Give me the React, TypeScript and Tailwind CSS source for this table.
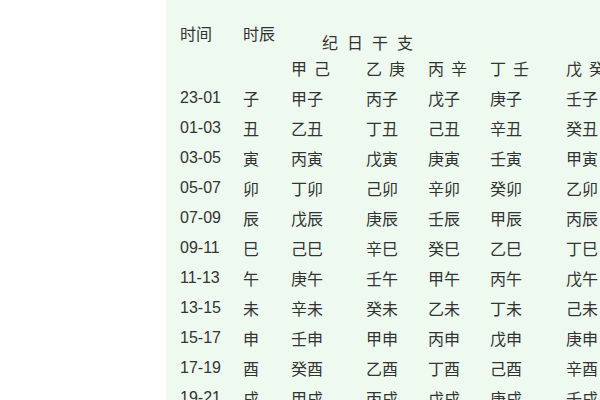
import React from "react";

const rows: string[][] = [
  ["23-01", "子", "甲子", "丙子", "戊子", "庚子", "壬子"],
  ["01-03", "丑", "乙丑", "丁丑", "己丑", "辛丑", "癸丑"],
  ["03-05", "寅", "丙寅", "戊寅", "庚寅", "壬寅", "甲寅"],
  ["05-07", "卯", "丁卯", "己卯", "辛卯", "癸卯", "乙卯"],
  ["07-09", "辰", "戊辰", "庚辰", "壬辰", "甲辰", "丙辰"],
  ["09-11", "巳", "己巳", "辛巳", "癸巳", "乙巳", "丁巳"],
  ["11-13", "午", "庚午", "壬午", "甲午", "丙午", "戊午"],
  ["13-15", "未", "辛未", "癸未", "乙未", "丁未", "己未"],
  ["15-17", "申", "壬申", "甲申", "丙申", "戊申", "庚申"],
  ["17-19", "酉", "癸酉", "乙酉", "丁酉", "己酉", "辛酉"],
  ["19-21", "戌", "甲戌", "丙戌", "戊戌", "庚戌", "壬戌"],
];

const sub: [string, string][] = [
  ["甲", "己"],
  ["乙", "庚"],
  ["丙", "辛"],
  ["丁", "壬"],
  ["戊", "癸"],
];

const cjk = "font-['Noto_Sans_CJK_SC',sans-serif]";
const num = "font-['Liberation_Sans',Arial,sans-serif]";
const cols = "grid grid-cols-[63px_48px_75px_62px_62px_76px_60px]";

export default function App() {
  return (
    <div className="flex h-[400px] w-[600px] overflow-hidden bg-white text-[#333333]">
      <div className="w-[166px] shrink-0 bg-white" />
      <div className="flex-1 overflow-hidden bg-[#eefaf0] pl-[14px]">
        <div className={`${cols} h-[53px]`}>
          <div className={`${cjk} mt-[23px] text-[16px] leading-5`}>时间</div>
          <div className={`${cjk} mt-[23px] text-[16px] leading-5`}>时辰</div>
          <div className={`${cjk} col-span-5 mt-[32px] flex gap-[9px] pl-[31px] text-[16px] leading-5`}>
            <span>纪</span>
            <span>日</span>
            <span>干</span>
            <span>支</span>
          </div>
        </div>
        <div className={`${cols} h-[30px] items-center`}>
          <div />
          <div />
          {sub.map(([a, b]) => (
            <div key={a} className={`${cjk} flex gap-[7px] whitespace-nowrap text-[16px] leading-5`}>
              <span>{a}</span>
              <span>{b}</span>
            </div>
          ))}
        </div>
        {rows.map((r) => (
          <div key={r[0]} className={`${cols} h-[30px] items-center`}>
            <div className={`${num} text-[16px] leading-5`}>{r[0]}</div>
            {r.slice(1).map((c, i) => (
              <div key={i} className={`${cjk} whitespace-nowrap text-[16px] leading-5`}>
                {c}
              </div>
            ))}
          </div>
        ))}
      </div>
    </div>
  );
}
